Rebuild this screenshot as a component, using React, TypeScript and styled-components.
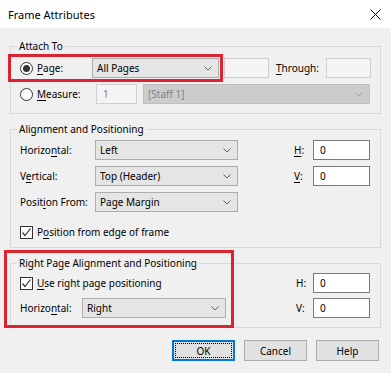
import React from 'react';
import styled, { createGlobalStyle, css } from 'styled-components';

const GlobalStyle = createGlobalStyle`
    html, body {
        margin: 0;
        padding: 0;
        background: #f0f0f0;
    }
    body {
        font-family: 'Noto Sans', 'Open Sans', sans-serif;
        font-size: 10px;
        color: #000;
    }
`;

const Dialog = styled.div`
    position: relative;
    width: 391px;
    height: 373px;
    background: #f0f0f0;
    overflow: hidden;
`;

const TitleBar = styled.div`
    height: 28px;
    background: #fff;
    display: flex;
    align-items: center;
    justify-content: space-between;
    padding: 0 10px 0 8px;
    font-size: 11px;
`;

const Body = styled.div`
    padding: 0 10px 0 10px;
    display: flex;
    flex-direction: column;
`;

const Group = styled.div<{ $top: number; $pad: string }>`
    position: relative;
    margin-top: ${(p) => p.$top}px;
    border: 1px solid #d9d9d9;
    padding: ${(p) => p.$pad};
    display: flex;
    flex-direction: column;
`;

const Legend = styled.span`
    position: absolute;
    top: -9px;
    left: 6px;
    padding: 0 2px;
    line-height: 16px;
    background: #f0f0f0;
`;

const Row = styled.div<{ $gap?: number; $h?: number }>`
    display: flex;
    align-items: center;
    height: ${(p) => p.$h ?? 20}px;
    margin-top: ${(p) => p.$gap ?? 0}px;
`;

const Label = styled.span<{ $w: number }>`
    width: ${(p) => p.$w}px;
    flex: none;
    white-space: nowrap;
`;

const Key = styled.u`
    text-underline-offset: 2px;
`;

const Option = styled.label<{ $w?: number }>`
    display: flex;
    align-items: center;
    gap: 4px;
    width: ${(p) => (p.$w ? `${p.$w}px` : 'auto')};
    flex: none;
    white-space: nowrap;
`;

const Radio = styled.span<{ $checked?: boolean }>`
    box-sizing: border-box;
    width: 13px;
    height: 13px;
    border-radius: 50%;
    border: 1px solid #333;
    background: #fff;
    display: inline-flex;
    align-items: center;
    justify-content: center;
    &::after {
        content: '';
        width: 7px;
        height: 7px;
        border-radius: 50%;
        background: #333;
        display: ${(p) => (p.$checked ? 'block' : 'none')};
    }
`;

const Box = styled.span`
    box-sizing: border-box;
    width: 13px;
    height: 13px;
    border: 1px solid #333;
    background: #fff;
    display: inline-flex;
    align-items: center;
    justify-content: center;
`;

const Select = styled.div<{ $w: number; $disabled?: boolean }>`
    box-sizing: border-box;
    width: ${(p) => p.$w}px;
    height: 20px;
    flex: none;
    display: flex;
    align-items: center;
    justify-content: space-between;
    padding: 0 6px 0 4px;
    background: ${(p) => (p.$disabled ? '#cccccc' : '#e5e5e5')};
    border: 1px solid ${(p) => (p.$disabled ? '#bfbfbf' : '#adadad')};
    color: ${(p) => (p.$disabled ? '#838383' : '#000')};
`;

const TextBox = styled.div<{ $w: number; $disabled?: boolean }>`
    box-sizing: border-box;
    width: ${(p) => p.$w}px;
    height: 20px;
    flex: none;
    display: flex;
    align-items: center;
    padding: 0 6px;
    background: ${(p) => (p.$disabled ? '#f4f4f4' : '#fff')};
    border: 1px solid ${(p) => (p.$disabled ? '#cfcfcf' : '#7a7a7a')};
    color: ${(p) => (p.$disabled ? '#838383' : '#000')};
`;

const Spacer = styled.div<{ $w: number }>`
    width: ${(p) => p.$w}px;
    flex: none;
`;

const Side = styled.div`
    margin-left: auto;
    display: flex;
    align-items: center;
`;

const Buttons = styled.div`
    display: flex;
    justify-content: flex-end;
    gap: 9px;
    margin-top: 12px;
    padding-right: 2px;
`;

const Button = styled.button<{ $default?: boolean }>`
    box-sizing: border-box;
    width: 63px;
    height: 21px;
    margin: 0;
    padding: 0;
    font: inherit;
    color: #000;
    background: #e1e1e1;
    border: 1px solid ${(p) => (p.$default ? '#0078d7' : '#adadad')};
    ${(p) =>
        p.$default &&
        css`
            box-shadow: inset 0 0 0 1px #0078d7;
            outline: 1px dotted #000;
            outline-offset: -4px;
        `}
`;

const Highlight = styled.div<{ $x: number; $y: number; $w: number; $h: number }>`
    position: absolute;
    left: ${(p) => p.$x}px;
    top: ${(p) => p.$y}px;
    width: ${(p) => p.$w}px;
    height: ${(p) => p.$h}px;
    box-sizing: border-box;
    border: 3px solid #dc2330;
    pointer-events: none;
`;

function Chevron({ disabled }: { disabled?: boolean }) {
    return (
        <svg width="8" height="5" viewBox="0 0 8 5">
            <polyline
                points="0.5,0.5 4,4 7.5,0.5"
                fill="none"
                stroke={disabled ? '#a0a0a0' : '#606060'}
                strokeWidth="1"
            />
        </svg>
    );
}

function Check() {
    return (
        <svg width="11" height="11" viewBox="0 0 11 11">
            <polyline
                points="1.5,5.5 4,8.5 9.5,1.5"
                fill="none"
                stroke="#333"
                strokeWidth="1.2"
            />
        </svg>
    );
}

function CloseIcon() {
    return (
        <svg width="11" height="11" viewBox="0 0 11 11">
            <path d="M0.5 0.5 L10.5 10.5 M10.5 0.5 L0.5 10.5" stroke="#000" strokeWidth="1" />
        </svg>
    );
}

function Dropdown({ w, value, disabled }: { w: number; value: string; disabled?: boolean }) {
    return (
        <Select $w={w} $disabled={disabled}>
            <span>{value}</span>
            <Chevron disabled={disabled} />
        </Select>
    );
}

export default function App() {
    return (
        <Dialog>
            <GlobalStyle />
            <TitleBar>
                <span>Frame Attributes</span>
                <CloseIcon />
            </TitleBar>
            <Body>
                <Group $top={18} $pad="11px 10px 9px 9px">
                    <Legend>Attach To</Legend>
                    <Row>
                        <Option $w={72}>
                            <Radio $checked />
                            <span>
                                <Key>P</Key>age:
                            </span>
                        </Option>
                        <Dropdown w={127} value="All Pages" />
                        <Spacer $w={5} />
                        <TextBox $w={45} $disabled />
                        <Spacer $w={7} />
                        <Label $w={50}>
                            <Key>T</Key>hrough:
                        </Label>
                        <TextBox $w={45} $disabled />
                    </Row>
                    <Row $gap={6}>
                        <Option $w={76}>
                            <Radio />
                            <span>
                                <Key>M</Key>easure:
                            </span>
                        </Option>
                        <TextBox $w={41} $disabled>
                            1
                        </TextBox>
                        <Spacer $w={6} />
                        <Dropdown w={227} value="[Staff 1]" disabled />
                    </Row>
                </Group>

                <Group $top={15} $pad="10px 10px 7px 9px">
                    <Legend>Alignment and Positioning</Legend>
                    <Row>
                        <Label $w={75}>
                            Horizo<Key>n</Key>tal:
                        </Label>
                        <Dropdown w={143} value="Left" />
                        <Side>
                            <Label $w={19}>
                                <Key>H</Key>:
                            </Label>
                            <TextBox $w={57}>0</TextBox>
                        </Side>
                    </Row>
                    <Row $gap={6}>
                        <Label $w={75}>
                            V<Key>e</Key>rtical:
                        </Label>
                        <Dropdown w={143} value="Top (Header)" />
                        <Side>
                            <Label $w={19}>
                                <Key>V</Key>:
                            </Label>
                            <TextBox $w={57}>0</TextBox>
                        </Side>
                    </Row>
                    <Row $gap={6}>
                        <Label $w={75}>
                            Posit<Key>i</Key>on From:
                        </Label>
                        <Dropdown w={143} value="Page Margin" />
                    </Row>
                    <Row $gap={12} $h={16}>
                        <Option>
                            <Box>
                                <Check />
                            </Box>
                            <span>
                                P<Key>o</Key>sition from edge of frame
                            </span>
                        </Option>
                    </Row>
                </Group>

                <Group $top={15} $pad="9px 10px 9px 9px">
                    <Legend>Right Page Alignment and Positioning</Legend>
                    <Row>
                        <Option>
                            <Box>
                                <Check />
                            </Box>
                            <span>
                                <Key>U</Key>se right page positioning
                            </span>
                        </Option>
                        <Side>
                            <Label $w={17}>H:</Label>
                            <TextBox $w={57}>0</TextBox>
                        </Side>
                    </Row>
                    <Row $gap={5}>
                        <Label $w={62}>
                            Horizo<Key>n</Key>tal:
                        </Label>
                        <Dropdown w={144} value="Right" />
                        <Side>
                            <Label $w={17}>V:</Label>
                            <TextBox $w={57}>0</TextBox>
                        </Side>
                    </Row>
                </Group>

                <Buttons>
                    <Button $default>OK</Button>
                    <Button>Cancel</Button>
                    <Button>Help</Button>
                </Buttons>
            </Body>
            <Highlight $x={8} $y={54} $w={215} $h={28} />
            <Highlight $x={4} $y={250} $w={230} $h={78} />
        </Dialog>
    );
}
